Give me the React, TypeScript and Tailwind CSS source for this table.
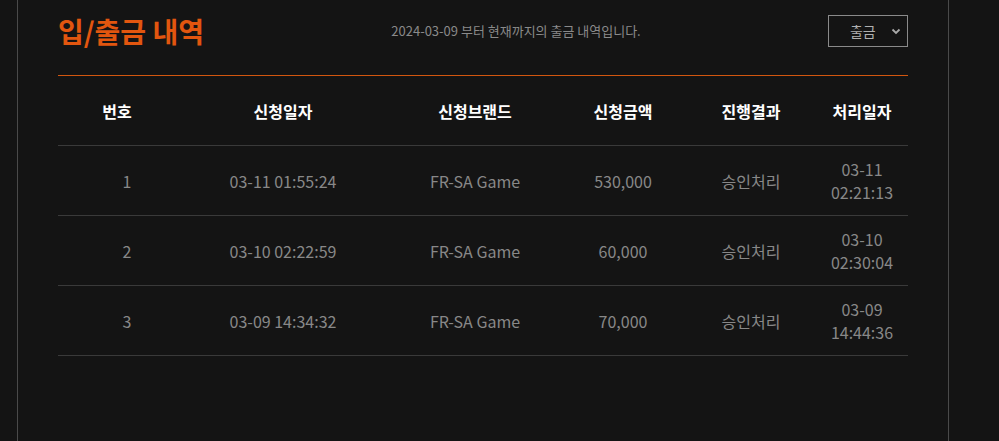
import React from 'react';

interface Row {
  no: number;
  requestedAt: string;
  brand: string;
  amount: string;
  status: string;
  processedDate: string;
  processedTime: string;
}

const rows: Row[] = [
  { no: 1, requestedAt: '03-11 01:55:24', brand: 'FR-SA Game', amount: '530,000', status: '승인처리', processedDate: '03-11', processedTime: '02:21:13' },
  { no: 2, requestedAt: '03-10 02:22:59', brand: 'FR-SA Game', amount: '60,000', status: '승인처리', processedDate: '03-10', processedTime: '02:30:04' },
  { no: 3, requestedAt: '03-09 14:34:32', brand: 'FR-SA Game', amount: '70,000', status: '승인처리', processedDate: '03-09', processedTime: '14:44:36' },
];

// column widths, table is 850px wide
const cols = ['w-[118px]', 'w-[214px]', 'w-[170px]', 'w-[126px]', 'w-[130px]', 'w-[92px]'];
const headers = ['번호', '신청일자', '신청브랜드', '신청금액', '진행결과', '처리일자'];

const App: React.FC = () => {
  return (
    <div
      className="min-h-[441px] w-full bg-[#141414]"
      style={{ fontFamily: '"Noto Sans CJK KR", "Noto Sans", sans-serif' }}
    >
      <div className="ml-[17px] min-h-[441px] w-[932px] border-x border-[#4a4a4a] px-10">
        {/* Title bar */}
        <div className="flex items-center justify-between border-b border-[#d2560f] pt-[15px] pb-[28px]">
          <h1 className="text-[28px] font-bold leading-[32px] text-[#e2560f]">입/출금 내역</h1>
          <p className="text-[13px] leading-[32px] text-[#8a8a8a]">2024-03-09 부터 현재까지의 출금 내역입니다.</p>
          <div className="flex h-8 w-20 items-center justify-between border border-[#8a8a8a] pl-[21px] pr-[6px]">
            <span className="text-[14px] text-[#b0b0b0]">출금</span>
            <svg width="10" height="10" viewBox="0 0 10 10" className="text-[#aaaaaa]">
              <path d="M1.5 3.5 L5 7 L8.5 3.5" fill="none" stroke="currentColor" strokeWidth="1.8" />
            </svg>
          </div>
        </div>

        {/* Table */}
        <div className="w-[850px]">
          <div className="flex h-[70px] items-center border-b border-[#3a3a3a]">
            {headers.map((h, i) => (
              <div key={h} className={`${cols[i]} text-center text-[16px] font-bold text-white`}>
                {h}
              </div>
            ))}
          </div>
          {rows.map((r) => (
            <div key={r.no} className="flex h-[70px] items-center border-b border-[#3a3a3a] text-[16px] text-[#888888]">
              <div className={`${cols[0]} pl-5 text-center`}>{r.no}</div>
              <div className={`${cols[1]} text-center`}>{r.requestedAt}</div>
              <div className={`${cols[2]} text-center`}>{r.brand}</div>
              <div className={`${cols[3]} text-center`}>{r.amount}</div>
              <div className={`${cols[4]} text-center`}>{r.status}</div>
              <div className={`${cols[5]} text-center leading-[23px]`}>
                <div>{r.processedDate}</div>
                <div>{r.processedTime}</div>
              </div>
            </div>
          ))}
        </div>
      </div>
    </div>
  );
};

export default App;
